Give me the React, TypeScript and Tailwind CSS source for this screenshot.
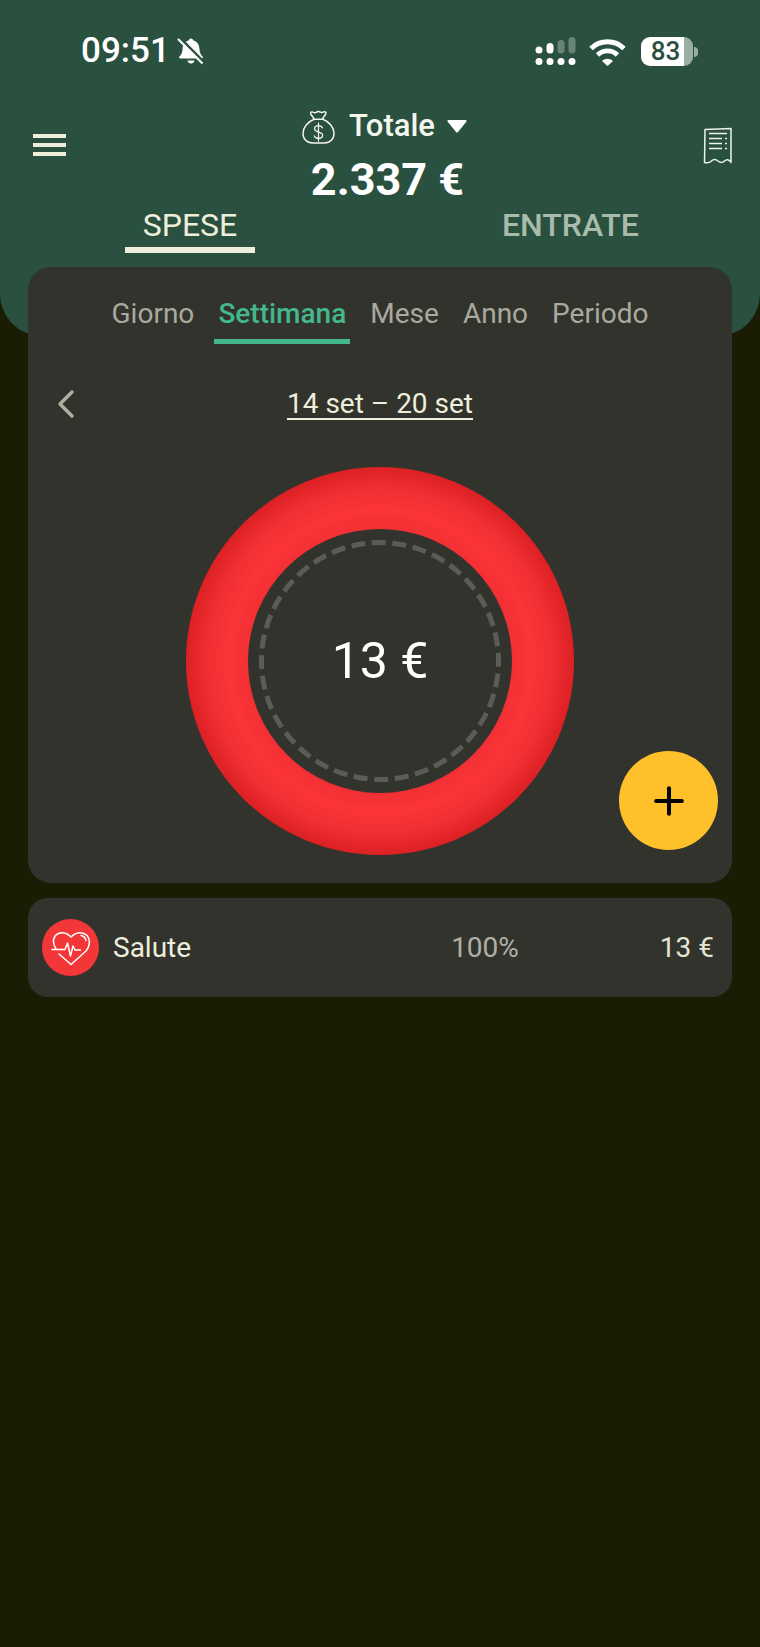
import { ChevronLeft, Plus } from "lucide-react";

const periods = ["Giorno", "Settimana", "Mese", "Anno", "Periodo"];

function BellOff() {
  return (
    <svg width="28" height="28" viewBox="0 0 28 28" fill="none">
      <path d="M14 1.500c1.200 0 2 .8 2 1.800 4 1 6.200 4.400 6.400 8.200.2 3.600 1 6 3.100 8 .8.800.4 2-.8 2H3.300c-1.200 0-1.600-1.200-.8-2 2.100-2 3-4.400 3.100-8 .2-3.800 2.400-7.200 6.400-8.200 0-1 .8-1.800 2-1.800Z" fill="#fff" />
      <path d="M10.500 23.500h7c-.3 1.800-1.700 3-3.500 3s-3.200-1.200-3.500-3Z" fill="#fff" />
      <path d="M3.500 1.500 27.500 25.500" stroke="#2a5040" strokeWidth="2.500" />
      <path d="M1 2 25.500 26.500" stroke="#fff" strokeWidth="2.200" />
    </svg>
  );
}

function Signal() {
  return (
    <svg width="41" height="29" viewBox="0 0 41 29" fill="#fff">
      <rect x="0.500" y="9.500" width="7" height="7" rx="3.500" />
      <rect x="11.500" y="6" width="7" height="10.500" rx="3.500" />
      <rect x="22.500" y="3" width="7" height="13.500" rx="3.500" fillOpacity="0.3" />
      <rect x="33.500" y="0" width="7" height="16.500" rx="3.500" fillOpacity="0.3" />
      <circle cx="4" cy="24.500" r="3.500" />
      <circle cx="15" cy="24.500" r="3.500" />
      <circle cx="26" cy="24.500" r="3.500" />
      <circle cx="37" cy="24.500" r="3.500" />
    </svg>
  );
}

function Wifi() {
  return (
    <svg width="37" height="28" viewBox="0 0 37 28" fill="none" stroke="#fff" strokeWidth="4.800">
      <path d="M2 10.500C11 1.500 26 1.500 35 10.500" />
      <path d="M8.500 17C14 11.500 23 11.500 28.500 17" />
      <path d="M13 23 18.500 28 24 23C20.500 20 16.500 20 13 23Z" fill="#fff" stroke="none" />
    </svg>
  );
}

function MoneyBag() {
  return (
    <svg width="33" height="36" viewBox="0 0 34 37" fill="none" stroke="#f4f6ee" strokeWidth="1.500" strokeLinejoin="round" strokeLinecap="round">
      <path d="M12.500 11.500c-.5-1.500-2.500-3.500-3.500-5.500-.6-1.500.8-2.500 2.200-1.800 1.500.7 2.300 1 3.300.3 1.500-1.300 3-1.300 4.500-.3 1.200.7 2 .5 3.500-.2 1.400-.6 2.800.4 2 2-1 2-3 4-3.500 5.500" />
      <path d="M12.500 11.500h9" />
      <path d="M12.500 11.500C6 14 1 20 1 26c0 6 4 10 10 10h12c6 0 10-4 10-10 0-6-5-12-11.500-14.500" />
      <path d="M21 20.500c-.5-1.500-2-2.300-4-2.300-2.300 0-4 1.200-4 3.200 0 4.400 8.300 2.300 8.300 6.700 0 2-1.800 3.200-4.300 3.200-2.200 0-3.900-1-4.300-2.700M17 15.500v18.500" strokeWidth="1.300" />
    </svg>
  );
}

function Receipt() {
  return (
    <svg width="30" height="37" viewBox="0 0 30 37" fill="none" stroke="#eef2e6" strokeWidth="1.500">
      <path d="M2 2.500 28 1.500V35.500C26 32 23.500 32 21.500 34 19.500 36 17.500 36 15 34 12.500 32 10.500 32 8.500 34 6.500 36 3.500 36 1.500 35.500Z" strokeLinejoin="round" />
      <path d="M6 6.500H24M6 11.500H19M22 11.500H24M6 16.500H19M22 16.500H24M6 21.500H19M22 21.500H24" />
    </svg>
  );
}

function HeartPulse() {
  return (
    <svg width="40" height="36" viewBox="0 0 40 36" fill="none" stroke="#fff" strokeWidth="1.500" strokeLinecap="round" strokeLinejoin="round">
      <path d="M5 19C2 14 1.500 9 4.500 5.500 8 1.500 15 1.500 20 7 25 1.500 32 1.500 36 5.500 40 10 38.500 17 35 21L20 34.500 8 24" />
      <path d="M1 19.500H14L16.500 13 19.500 26 22 16 24 20H29.500" />
      <path d="M30 5.500C32.500 6 34.500 8 35 10.500" />
    </svg>
  );
}

export default function App() {
  return (
    <div className="relative min-h-[1647px] bg-[#1a1c04] font-['Roboto',sans-serif] overflow-hidden">
      {/* Green header */}
      <header className="h-[336px] rounded-b-[42px] bg-[#2a5040]">
        <div className="flex items-center justify-between pl-[81px] pr-[62px] pt-[33px] h-[68px]">
          <div className="flex items-center gap-[7px]">
            <span className="text-[35px] leading-[34px] font-medium text-white">09:51</span>
            <BellOff />
          </div>
          <div className="flex items-center gap-[13px] pt-[2px]">
            <Signal />
            <Wifi />
            <div className="ml-[2px] flex items-center gap-[1px]">
              <div className="flex h-[29px] w-[52px] items-center justify-center rounded-[9px] bg-[linear-gradient(90deg,#ffffff_83%,#9aaea4_83%)] pr-[3px] text-[26px] font-medium text-[#2a5040]">
                83
              </div>
              <div className="h-[10px] w-[4px] rounded-r-full bg-[#9aaea4]" />
            </div>
          </div>
        </div>

        <div className="flex items-start justify-between pl-[33px] pr-[28px] pt-[39px]">
          <div className="mt-[27px] flex w-[33px] flex-col gap-[5.500px]">
            <div className="h-[3.500px] bg-[#eef0dc]" />
            <div className="h-[3.500px] bg-[#eef0dc]" />
            <div className="h-[3.500px] bg-[#eef0dc]" />
          </div>
          <div className="ml-[6px] flex flex-col items-center">
            <div className="flex h-[38px] items-center gap-[14px] pr-[6px]">
              <MoneyBag />
              <span className="text-[31px] font-medium text-[#f4f6ee]">Totale</span>
              <svg width="20" height="13" viewBox="0 0 20 13" fill="#fff" className="ml-[-2px]">
                <path d="M1.500 0H18.500C19.500 0 20 1 19.300 1.800L11 12C10.400 12.700 9.600 12.700 9 12L.7 1.800C0 1 .5 0 1.500 0Z" />
              </svg>
            </div>
            <div className="mt-[10px] text-[45px] leading-[50px] font-bold text-white">2.337 €</div>
          </div>
          <div className="mt-[20px] mr-[-1px]">
            <Receipt />
          </div>
        </div>

        <div className="flex pl-[125px] pr-[128px] justify-between pt-[2px]">
          <div className="flex w-[130px] flex-col items-center">
            <span className="text-[32px] leading-[36px] text-[#eeeedb]">SPESE</span>
            <div className="mt-[4px] h-[6px] w-full bg-[#eeeedb]" />
          </div>
          <span className="w-[130px] text-center text-[32px] leading-[36px] font-medium text-[#a9bbaa]">ENTRATE</span>
        </div>
      </header>

      {/* Main card */}
      <main className="relative mx-[28px] mt-[-69px] h-[616px] rounded-[23px] bg-[#32332d]">
        <div className="flex justify-center gap-[24px] pt-[29px]">
          {periods.map((p) => (
            <div key={p} className="flex flex-col items-center">
              <span className={p === "Settimana" ? "text-[28px] leading-[36px] font-medium text-[#42b88c]" : "text-[28px] leading-[36px] text-[#aaa99f]"}>
                {p}
              </span>
              <div className={p === "Settimana" ? "mt-[7px] h-[5px] w-[136px] -mx-[4px] bg-[#42b88c]" : "mt-[7px] h-[5px]"} />
            </div>
          ))}
        </div>

        <div className="relative mt-[42px] flex h-[36px] items-center justify-center">
          <ChevronLeft className="absolute left-[14px] h-[48px] w-[48px] text-[#b0afa0]" strokeWidth={1.700} />
          <span className="text-[28px] leading-[36px] text-[#eeeedb] underline underline-offset-[5px] decoration-[1.500px]">14 set – 20 set</span>
        </div>

        <div className="mt-[45px] flex justify-center">
          <div className="flex h-[388px] w-[388px] items-center justify-center rounded-full bg-[radial-gradient(circle_closest-side,#f23034_68%,#fb3438_78%,#f03034_88%,#dc2023_100%)]">
            <div className="relative flex h-[264px] w-[264px] items-center justify-center rounded-full bg-[#32332d]">
              <svg width="246" height="246" viewBox="0 0 246 246" className="absolute left-[9px] top-[9px]" fill="none">
                <circle cx="123" cy="123" r="118.500" stroke="#5b5c55" strokeWidth="5" strokeDasharray="14 6.680" transform="rotate(-94 123 123)" />
              </svg>
              <span className="text-[50px] leading-[60px] text-white">13 €</span>
            </div>
          </div>
        </div>

        <button className="absolute right-[14px] bottom-[33px] flex h-[99px] w-[99px] items-center justify-center rounded-full bg-[#fec12b]">
          <Plus className="h-[44px] w-[44px] text-black" strokeWidth={2.200} />
        </button>
      </main>

      {/* Category row */}
      <section className="mx-[28px] mt-[15px] flex h-[99px] items-center rounded-[20px] bg-[#32332d] pl-[14px] pr-[18px]">
        <div className="flex h-[57px] w-[57px] items-center justify-center rounded-full bg-[#f33638]">
          <HeartPulse />
        </div>
        <span className="ml-[14px] pt-[1px] text-[28px] text-[#eeeedb]">Salute</span>
        <span className="ml-auto mr-[141px] pt-[1px] text-[28px] text-[#b0afa5]">100%</span>
        <span className="pt-[1px] text-[28px] text-[#e4e4d2]">13 €</span>
      </section>
    </div>
  );
}
